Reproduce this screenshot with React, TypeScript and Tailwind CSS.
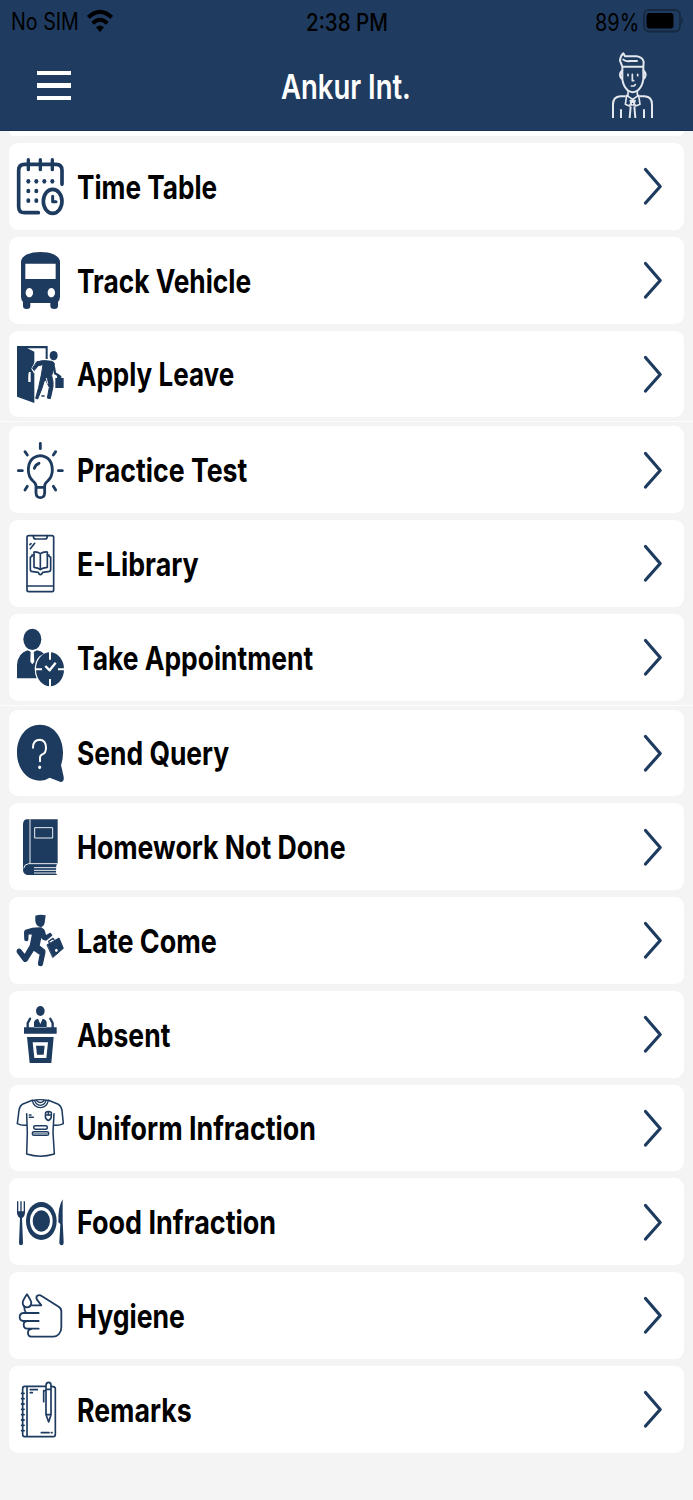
import { useLayoutEffect, useRef, useState, type ReactNode } from "react";

const NAVY = "#1d3a5f";

/** Condenses its text horizontally so that it takes up the given width. */
function CondensedText({ width, className, children }: { width: number; className: string; children: string }) {
  const ref = useRef<HTMLSpanElement>(null);
  const [scale, setScale] = useState(0.82);
  useLayoutEffect(() => {
    if (ref.current) setScale(width / ref.current.offsetWidth);
  }, [width, children]);
  return (
    <span className="block shrink-0" style={{ width }}>
      <span
        ref={ref}
        className={`inline-block origin-left whitespace-nowrap ${className}`}
        style={{ transform: `scaleX(${scale})` }}
      >
        {children}
      </span>
    </span>
  );
}

function Icon({ top, children }: { top: number; children: ReactNode }) {
  return (
    <svg
      viewBox={`45 ${top} 150 180`}
      className="h-[60px] w-[50px] shrink-0"
      fill="none"
      stroke={NAVY}
      strokeWidth={8}
      strokeLinecap="round"
      strokeLinejoin="round"
    >
      {children}
    </svg>
  );
}

const calendarDots = [
  [85, 155], [109, 155], [133, 155], [157, 155],
  [85, 184], [109, 184],
  [85, 213], [109, 213],
];

const TimeTableIcon = (
  <Icon top={79}>
    <path strokeWidth={11} d="M115 249H74Q56 249 56 231V122Q56 104 74 104H168Q186 104 186 122V164" />
    <path strokeWidth={10} d="M85 90V120M121 90V120M157 90V120" />
    {calendarDots.map(([x, y]) => (
      <ellipse key={`${x}-${y}`} cx={x} cy={y} rx={6} ry={7} fill={NAVY} stroke="none" />
    ))}
    <ellipse cx={158} cy={215} rx={28} ry={36} strokeWidth={11} />
    <path strokeWidth={9} d="M158 200V216H168" />
  </Icon>
);

const BusIcon = (
  <Icon top={360}>
    <path
      fill={NAVY}
      stroke="none"
      fillRule="evenodd"
      d="M63 396Q64 381 82 373Q98 366 121 366Q145 366 160 373Q179 381 180 396V500Q180 509 174 516V528Q174 537 163 537Q151 537 151 528V519H91V528Q91 537 80 537Q69 537 69 528V516Q63 509 63 500ZM76 401V447H167V401ZM88 474A11 14 0 1 0 88.1 474ZM154 474A11 14 0 1 0 154.1 474Z"
    />
  </Icon>
);

const LeaveIcon = (
  <Icon top={57}>
    <path fill={NAVY} stroke="none" fillRule="evenodd" d="M51 63H143V102H137V70H82L103 80V234L51 215ZM87 141Q84 145 85 171H92V141Z" />
    <path stroke="white" strokeWidth={4} d="M106 112L96 131L103 143" />
    <ellipse cx={161} cy={92} rx={12} ry={14} fill={NAVY} stroke="none" />
    <path fill={NAVY} strokeWidth={3} d="M111 110Q130 104 155 109Q165 111 163 122L155 152L159 170V185L151 221L142 219L148 187L137 165L132 170L126 190L113 222L107 220L116 187L124 150L129 119L115 122L103 136L98 131Z" />
    <path strokeWidth={7} d="M162 127L165 145L177 152" />
    <path fill={NAVY} stroke="none" d="M166 159H171V154Q180 148 184 154V159H191V189H166Z" />
    <path stroke="white" strokeWidth={3} d="M139 160L143 175" />
    <path strokeWidth={5} d="M126 213H132" />
  </Icon>
);

const BulbIcon = (
  <Icon top={344}>
    <path strokeWidth={8.5} d="M108 482Q108 474 99 467Q85 454 85 434Q86 394 121 391Q156 394 157 434Q157 454 143 467Q134 474 134 482V503Q133 517 121 517Q109 517 108 503ZM108 486H134M103 429Q106 418 117 414" />
    <path strokeWidth={8.5} d="M121 354V370M75 379L82 389M167 379L160 389M55 436H67M175 436H187M82 483L75 494M160 483L167 494" />
  </Icon>
);

const LibraryIcon = (
  <Icon top={55}>
    <g strokeWidth={5}>
      <rect x={81} y={63} width={80} height={168} rx={5} />
      <path d="M100 63Q100 73 107 73H135Q142 73 142 63M82 214H160M91 102L104 86M90 90L93 87" />
      <path d="M121 117Q113 111 102 112V158Q114 159 121 165Q128 159 142 158V112Q129 111 121 117V163" />
      <path d="M102 121H96V125L91 128V164Q91 171 98 171L115 173Q117 180 121 180Q126 180 128 173L145 171Q152 171 152 164V128L147 125V121H142" />
    </g>
  </Icon>
);

const AppointmentIcon = (
  <Icon top={336}>
    <ellipse cx={97} cy={373} rx={27} ry={32} fill={NAVY} stroke="none" />
    <path fill={NAVY} stroke="none" d="M83 406L97 413L111 406Q125 409 132 416Q106 425 104 460Q104 477 110 490H51V450Q54 414 83 406Z" />
    <path fill="white" stroke="none" d="M92 408H101L103 440L97 448L91 440Z" />
    <ellipse cx={150} cy={463} rx={42} ry={51} fill={NAVY} stroke="none" />
    <path stroke="white" strokeWidth={6} strokeLinecap="butt" d="M150 411V434M150 492V515M107 463H126M174 463H193" />
    <path stroke="white" strokeWidth={7} strokeLinecap="butt" d="M136 453L149 466L167 443" />
  </Icon>
);

const QueryIcon = (
  <Icon top={54}>
    <path fill={NAVY} stroke="none" d="M120 59C159 59 189 94 189 143Q189 163 183 180L191 215Q193 231 182 231L149 218Q136 227 120 227C80 227 51 190 51 143C51 94 80 59 120 59Z" />
    <path stroke="white" strokeWidth={6} d="M99 128Q99 104 120 104Q138 106 138 128Q138 144 127 148Q120 151 120 159V169" />
    <ellipse cx={119} cy={187} rx={4.5} ry={5.5} fill="white" stroke="none" />
  </Icon>
);

const BookIcon = (
  <Icon top={335}>
    <path fill={NAVY} stroke="none" d="M82 342H173V475L169 479L168 503L171 509H83Q69 508 69 492V358Q69 342 82 342Z" />
    <g stroke="white" strokeWidth={2.8} strokeLinecap="butt">
      <path d="M90 342V474M173 475H86Q73 476 71 489M173 487H102M173 495H102M173 503H102" />
      <rect x={104} y={367} width={54} height={31} />
    </g>
  </Icon>
);

const LateIcon = (
  <Icon top={61}>
    <path fill={NAVY} stroke="none" d="M106 78Q121 73 137 77L134 99Q131 112 121 112Q107 109 106 94Z" />
    <path fill={NAVY} strokeWidth={4} d="M77 122Q99 114 124 115L132 122L137 139L151 131L155 137L138 151L129 148L123 140L117 168L133 181Q136 185 134 191L127 223Q126 228 121 228Q114 226 116 219L121 194L101 181L82 211Q77 218 71 213L54 190Q49 184 55 179Q59 177 63 182L74 196L91 168L98 133L84 132L83 151Q81 155 75 151L74 129Q74 124 77 122Z" />
    <path fill={NAVY} strokeWidth={3} d="M142 165L177 145L190 176L159 203Z" />
    <path strokeWidth={4} d="M148 160L146 155L159 146L162 150" />
    <ellipse cx={169} cy={182} rx={4} ry={5} fill="white" stroke="none" />
  </Icon>
);

const AbsentIcon = (
  <Icon top={342}>
    <ellipse cx={121} cy={363} rx={13} ry={15} fill={NAVY} stroke="none" />
    <path fill={NAVY} stroke="none" d="M72 412H170V431H72ZM102 413V397Q104 388 114 386L121 402L128 386Q138 388 140 397V413ZM81 441H161L154 519H89ZM98 457L103 504H139L144 457Z" fillRule="evenodd" />
    <path fill={NAVY} stroke="none" d="M108 467H134L131 494H111Z" />
    <path strokeWidth={7} d="M83 412V400L90 386M158 412V400L151 386" />
  </Icon>
);

const UniformIcon = (
  <Icon top={54}>
    <g strokeWidth={4.6}>
      <path d="M97 61L67 73Q59 78 57 91L52 131Q66 138 80 135M145 61L175 73Q184 78 186 91L190 131Q176 138 162 135M80 101L82 157L80 222Q121 235 163 222L159 157L162 101" />
      <path strokeWidth={4} d="M97 61Q121 57 145 61Q141 82 121 83Q101 82 97 61ZM104 62Q108 75 121 76Q134 75 138 62M110 62Q121 73 132 62" />
      <path d="M137 97Q145 92 154 97V109Q154 118 145 122Q136 118 136 109ZM136 105H154M145 96V106M88 105H93M88 112H100" />
      <path d="M106 137H137Q142 137 142 142Q142 148 137 148H130M122 148H106Q101 147 101 142Q101 137 106 137M120 148H130" />
      <rect x={97} y={155} width={49} height={11} rx={5} />
      <path d="M101 161H142" strokeWidth={2} />
    </g>
  </Icon>
);

const FoodIcon = (
  <Icon top={335}>
    <ellipse cx={124} cy={422} rx={46} ry={57} fill={NAVY} stroke="none" />
    <ellipse cx={124} cy={422} rx={34} ry={42} fill="white" stroke="none" />
    <ellipse cx={124} cy={422} rx={26} ry={32} fill={NAVY} stroke="none" />
    <path fill={NAVY} stroke="none" d="M51 363H55V393H61V363H65V393H71V363H75V397Q74 409 66 413L69 488Q69 495 63 495Q57 495 57 488L60 413Q52 409 51 397ZM188 357V424L191 486Q191 495 185 495Q178 495 178 486L181 431L175 426Q174 378 188 357Z" />
  </Icon>
);

const HygieneIcon = (
  <Icon top={61}>
    <g strokeWidth={5.4}>
      <path d="M81 89Q69 106 68 114Q69 128 81 128Q93 128 94 114Q92 106 81 89Z" />
      <path d="M94 122H124L111 105Q107 98 112 93Q118 89 125 94L176 126Q184 131 184 140V188Q184 200 177 208Q170 216 160 216H94Q84 215 84 204Q84 193 94 193M73 126Q72 137 78 144M116 145H70Q59 146 59 157Q59 168 70 169H116M82 169Q71 170 71 180Q71 191 82 192H116" />
    </g>
  </Icon>
);

const spiralRings = [385, 401, 417, 433, 449, 465, 481, 497];

const RemarksIcon = (
  <Icon top={342}>
    <g strokeWidth={5}>
      <path d="M136 364H74Q68 364 68 371V508Q68 515 74 515H160Q166 515 166 508V371Q166 364 154 364M81 364V515" />
      {spiralRings.map((y) => (
        <path key={y} strokeWidth={5.5} d={`M65 ${y}H72`} />
      ))}
      <path d="M91 374H112M91 383H97M124 503H147M154 503H156" />
      <path d="M138 373V362Q138 352 146 352Q153 352 153 362V449L146 471L138 449ZM138 373H153M138 449H153M131 377V410M134 377H138" />
    </g>
  </Icon>
);

interface Entry {
  label: string;
  width: number;
  icon: ReactNode;
}

const groups: Entry[][] = [
  [
    { label: "Time Table", width: 140, icon: TimeTableIcon },
    { label: "Track Vehicle", width: 174, icon: BusIcon },
    { label: "Apply Leave", width: 157, icon: LeaveIcon },
  ],
  [
    { label: "Practice Test", width: 170, icon: BulbIcon },
    { label: "E-Library", width: 122, icon: LibraryIcon },
    { label: "Take Appointment", width: 236.5, icon: AppointmentIcon },
  ],
  [
    { label: "Send Query", width: 152, icon: QueryIcon },
    { label: "Homework Not Done", width: 269, icon: BookIcon },
    { label: "Late Come", width: 140, icon: LateIcon },
    { label: "Absent", width: 93, icon: AbsentIcon },
    { label: "Uniform Infraction", width: 239, icon: UniformIcon },
    { label: "Food Infraction", width: 199, icon: FoodIcon },
    { label: "Hygiene", width: 108, icon: HygieneIcon },
    { label: "Remarks", width: 115, icon: RemarksIcon },
  ],
];

function Row({ label, width, icon }: Entry) {
  return (
    <li className="flex h-[86.75px] items-center rounded-[9px] bg-white pr-[19.5px] pl-[6px]">
      {icon}
      <div className="ml-[12px] flex-1 pt-[3px]">
        <CondensedText width={width} className="text-[32.5px] leading-[40px] font-bold text-black">
          {label}
        </CondensedText>
      </div>
      <svg viewBox="0 0 24 40" className="h-[40px] w-[24px]" fill="none" stroke={NAVY} strokeWidth={3.2} strokeLinecap="round" strokeLinejoin="round">
        <path d="M4.5 3.5L19.2 20.5L4.5 37" />
      </svg>
    </li>
  );
}

function Header() {
  return (
    <header className="h-[130.5px] border-b border-[#152f55] bg-[#1f3b5f]">
      <div className="flex h-[42px] items-center justify-between pr-[9px] pl-[11px] text-black">
        <div className="flex w-[200px] items-center gap-[8px]">
          <div className="pt-[2px]">
            <CondensedText width={68} className="text-[24px] leading-[30px]">
              No SIM
            </CondensedText>
          </div>
          <svg viewBox="0 0 78 72" className="h-[24px] w-[26px]">
            <g fill="none" stroke="black" strokeWidth={12}>
              <path d="M4 25Q39 -8 74 25" />
              <path d="M17 43Q39 21 61 43" />
            </g>
            <path d="M27 55Q39 44 51 55L39 69Z" />
          </svg>
        </div>
        <div className="pt-[3px] pr-[2px]">
          <CondensedText width={82} className="text-[24px] leading-[30px] font-medium">
            2:38 PM
          </CondensedText>
        </div>
        <div className="flex w-[200px] items-center justify-end gap-[4px]">
          <div className="pt-[3px]">
            <CondensedText width={44} className="text-[24px] leading-[30px]">
              89%
            </CondensedText>
          </div>
          <svg viewBox="0 0 41 24" className="h-[24px] w-[41px]">
            <rect x={1} y={1} width={36} height={21.5} rx={5} fill="none" stroke="#152941" strokeWidth={1.8} />
            <rect x={3.5} y={4} width={27} height={15.5} rx={3} />
            <path d="M38.5 8Q42 11.5 38.5 15Z" fill="#152941" />
          </svg>
        </div>
      </div>
      <div className="flex h-[87px] items-center justify-between pr-[38px] pl-[37px]">
        <div className="flex w-[200px] flex-col gap-[8px]">
          <i className="block h-[4.4px] w-[34px] bg-white" />
          <i className="block h-[4.4px] w-[34px] bg-white" />
          <i className="block h-[4.4px] w-[34px] bg-white" />
        </div>
        <div className="pt-[2px]">
          <CondensedText width={130} className="text-[34px] leading-[40px] font-semibold text-white">
            Ankur Int.
          </CondensedText>
        </div>
        <div className="flex w-[200px] justify-end">
          <svg viewBox="150 152 135 210" className="h-[70px] w-[45px]" fill="none" stroke="#e3e8ee" strokeWidth={6} strokeLinecap="round" strokeLinejoin="round">
            <path d="M187 211V199H250V211M187 199L180 181Q181 167 190 159L195 168H230Q247 170 251 184L250 201M190 178Q196 184 210 182H231" />
            <path d="M187 211Q180 215 180 225Q181 234 187 237M250 211Q257 215 257 225Q255 234 250 237M187 211V237Q190 257 202 269Q218 282 235 269Q247 257 250 237V211" />
            <path d="M217 222V241H221M214 257H222L226 253M204 222V226M233 222V226" strokeWidth={5} />
            <path d="M204 274V285M232 274V285M200 285L218 297L236 285L240 312L227 317L218 301L208 317L196 312ZM211 301H225L221 314H214Z" strokeWidth={5} />
            <path strokeLinecap="butt" d="M197 288H181Q159 290 159 312V353M238 288H254Q276 290 276 312V353M183 327V353M252 327V353M212 318L209 353M223 318L226 353" />
          </svg>
        </div>
      </div>
    </header>
  );
}

export default function App() {
  return (
    <div className="h-[1500px] w-[693px] overflow-hidden bg-[#f4f4f4] font-['Inter','Liberation_Sans',sans-serif]">
      <Header />
      <div className="mx-[9px] h-[5.5px] rounded-b-[6px] bg-white" />
      <main className="pt-[7px]">
        {groups.map((entries, index) => (
          <section key={entries[0].label}>
            {index > 0 && <hr className="mt-[4px] mb-[4px] border-t border-[#fcfcfc]" />}
            <ul className="mx-[9px] flex flex-col gap-[7px]">
              {entries.map((entry) => (
                <Row key={entry.label} {...entry} />
              ))}
            </ul>
          </section>
        ))}
      </main>
    </div>
  );
}
